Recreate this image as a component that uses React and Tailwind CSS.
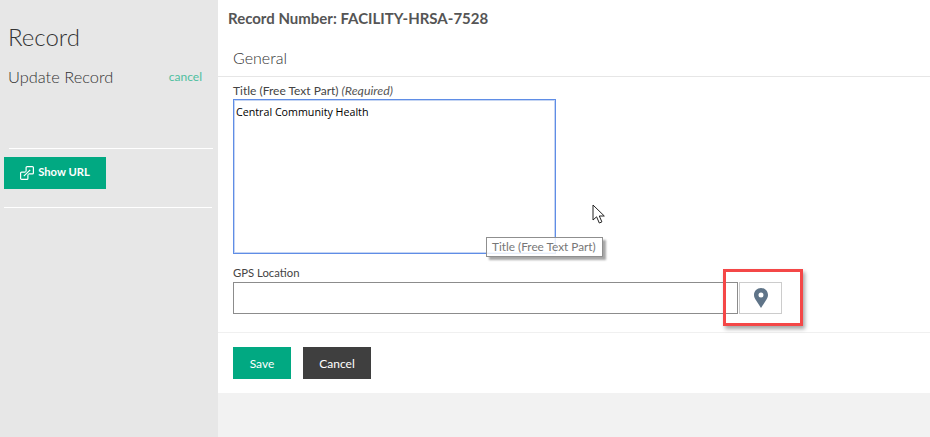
import React from "react"

const lato = { fontFamily: "Lato, 'Open Sans', sans-serif" }

function LinkIcon() {
  return (
    <svg width="14" height="14" viewBox="0 0 14 14" fill="none" stroke="white" strokeWidth="1.2">
      <rect x="0.6" y="6.1" width="7.3" height="7.3" rx="1" />
      <rect x="6.1" y="0.6" width="7.3" height="7.3" rx="1" />
      <path d="M3.8 10.2L10.2 3.8" stroke="#01a982" strokeWidth="3" />
      <path d="M3.8 10.2L10.2 3.8" />
    </svg>
  )
}

function Pin() {
  return (
    <svg width="14" height="20" viewBox="0 0 14 20">
      <path
        fillRule="evenodd"
        fill="#5f7488"
        d="M7 0C3.1 0 0 3.1 0 7c0 2.1.9 3.7 2 5.2L7 20l5-7.8c1.1-1.5 2-3.1 2-5.2 0-3.9-3.1-7-7-7zm0 4.6a2.5 2.5 0 1 1 0 5 2.5 2.5 0 0 1 0-5z"
      />
    </svg>
  )
}

function Cursor() {
  return (
    <svg width="14" height="20" viewBox="0 0 14 20" className="absolute left-[592px] top-[204px]">
      <path d="M1 1v15l3.6-3.2L7.3 19l2.6-1.1-2.6-5.9h5z" fill="white" stroke="#222" strokeWidth="1" />
    </svg>
  )
}

export default function App() {
  return (
    <div className="relative flex w-[930px] h-[437px] overflow-hidden bg-[#f2f2f2]" style={lato}>
      <aside className="w-[218px] shrink-0 bg-[#e7e7e7] pt-[22px] pl-[4px] pr-[2px]">
        <h1 className="pl-[4px] text-[24px] leading-[30px] font-light text-[#333]">Record</h1>
        <div className="flex items-center justify-between pl-[4px] pr-[14px] mt-[14px] h-[22px]">
          <span className="text-[16.4px] font-light text-[#333]">Update Record</span>
          <a className="text-[12px] text-[#4fbf9f]">cancel</a>
        </div>
        <div className="ml-[5px] mr-[3px] mt-[60px] h-px bg-white" />
        <button className="flex items-center justify-center gap-[4px] mt-[8px] pb-px w-[102px] h-[32px] bg-[#01a982] text-white text-[11.2px] font-bold">
          <LinkIcon />
          Show URL
        </button>
        <div className="mr-[4px] mt-[18px] h-px bg-white" />
      </aside>

      <main className="flex-1 self-start bg-white h-[393px]">
        <div className="pl-[10px] pt-[9px] h-[45px] text-[15px] leading-[18px] font-bold text-[#555]">
          Record Number: FACILITY-HRSA-7528
        </div>
        <div className="pl-[15px] h-[32px] border-b border-[#e6e6e6] text-[16px] leading-[26px] font-light text-[#333]">
          General
        </div>
        <div className="pl-[15px] h-[256px] border-b border-[#f0f0f0]">
          <label className="block pt-[6px] h-[22px] text-[12px] leading-[15px] text-[#444]">
            Title (Free Text Part) <em className="text-[12.4px] text-[#555]">(Required)</em>
          </label>
          <textarea
            readOnly
            value="Central Community Health"
            className="block w-[323px] h-[155px] resize-none border border-[#5f8de6] shadow-[inset_0_0_0_1px_#c5d5f3] px-[2px] pt-[4px] text-[10.7px] leading-[17px] text-black outline-none"
            style={{ fontFamily: "'Open Sans', sans-serif" }}
          />
          <label className="block mt-[11px] h-[17px] text-[11.3px] leading-[16px] text-[#444]">GPS Location</label>
          <div className="flex">
            <input className="w-[505px] h-[32px] border border-[#8c8c8c] outline-none" />
            <button className="flex items-center justify-center w-[43px] h-[32px] border border-[#cccccc] ml-px">
              <Pin />
            </button>
          </div>
        </div>
        <div className="flex gap-[12px] pl-[15px] pt-[14px]">
          <button className="w-[58px] h-[32px] bg-[#01a982] pt-px text-white text-[12px]">Save</button>
          <button className="w-[68px] h-[32px] bg-[#3f3f3f] pt-px text-white text-[12px]">Cancel</button>
        </div>
      </main>

      <Cursor />

      <div className="absolute left-[486px] top-[237px] w-[117px] h-[20px] border border-[#8f8f8f] bg-white/85 shadow-[3px_3px_2px_rgba(0,0,0,0.35)] pl-[5px] text-[11.8px] leading-[18px] text-[#777]">
        Title (Free Text Part)
      </div>

      <div className="absolute left-[723px] top-[269px] w-[80px] h-[57px] border-[3px] border-[#f44747] shadow-[2px_3px_4px_rgba(0,0,0,0.35)]" />
    </div>
  )
}
